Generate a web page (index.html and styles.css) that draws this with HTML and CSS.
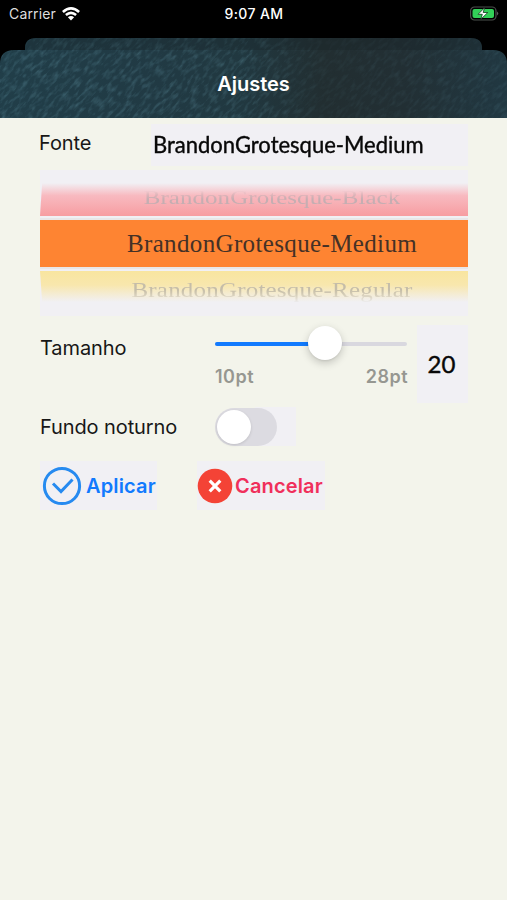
FILE: index.html
```html
<!DOCTYPE html>
<html lang="pt">
<head>
<meta charset="utf-8">
<title>Ajustes</title>
<link rel="stylesheet" href="styles.css">
</head>
<body>
<div class="status">
  <div class="carrier"><span>Carrier</span>
    <svg width="18" height="14" viewBox="0 0 18 14" fill="none" stroke="#fff" stroke-width="2.600"><path d="M.9 5Q9-2.200 17.100 5M3.900 8.100Q9 3.800 14.100 8.100"/><path d="M5.900 10.300Q9 7.700 12.100 10.300L9 13.500Z" fill="#fff" stroke="none"/></svg>
  </div>
  <time>9:07 AM</time>
  <svg class="battery" width="31" height="16" viewBox="0 0 31 16"><rect x="2.600" y="1" width="25.400" height="13" rx="4" fill="none" stroke="#4b504d" stroke-width="1.200"/><rect x="4.500" y="3" width="21.500" height="9" rx="2" fill="#32d158"/><path d="M29 5.500Q31.500 7.500 29 9.500Z" fill="#5b5e5d"/><path d="M16.500 1.800 10.100 8.300h4.200L12.800 13.300l7-6.800h-4.600Z" fill="#fff" stroke="#12381c" stroke-width=".8"/></svg>
</div>
<header class="head">
  <svg class="texture" width="507" height="80" viewBox="0 0 507 80">
    <defs>
      <linearGradient id="tone"><stop offset="0" stop-color="#213e49"/><stop offset=".3" stop-color="#213a44"/><stop offset=".48" stop-color="#213840"/><stop offset=".64" stop-color="#222e31"/><stop offset=".8" stop-color="#222f34"/><stop offset="1" stop-color="#213842"/></linearGradient>
      <linearGradient id="fade"><stop offset="0" stop-color="#fff"/><stop offset=".48" stop-color="#ddd"/><stop offset=".64" stop-color="#444"/><stop offset="1" stop-color="#777"/></linearGradient>
      <filter id="grain" x="0" y="0" width="100%" height="100%"><feTurbulence type="fractalNoise" baseFrequency=".11 .3" numOctaves="3" seed="8"/><feColorMatrix values="0 0 0 0 .18  0 0 0 0 .43  0 0 0 0 .53  1.500 0 0 0 -.65"/></filter>
      <mask id="wear"><rect width="507" height="80" fill="url(#fade)"/></mask>
      <clipPath id="sheets"><path d="M25 12V10Q25 0 36 0H471Q482 0 482 10V12H493Q507 12 507 26V80H0V26Q0 12 14 12Z"/></clipPath>
    </defs>
    <g clip-path="url(#sheets)"><rect width="507" height="80" fill="url(#tone)"/><g mask="url(#wear)"><g transform="rotate(-48 253 40)"><rect x="-50" y="-250" width="620" height="580" filter="url(#grain)" opacity=".45"/></g></g><rect x="25" width="457" height="12" fill="#172226" opacity=".3"/></g>
  </svg>
  <h1>Ajustes</h1>
</header>
<main>
  <section class="font-row"><label>Fonte</label><div class="sample"><span>BrandonGrotesque-Medium</span></div></section>
  <section class="picker">
    <div class="option black"><span>BrandonGrotesque-Black</span></div>
    <div class="option medium"><span>BrandonGrotesque-Medium</span></div>
    <div class="option regular"><span>BrandonGrotesque-Regular</span></div>
  </section>
  <section class="size-row">
    <label>Tamanho</label>
    <div class="range"><div class="track"><div class="filled"></div><div class="knob"></div></div><div class="limits"><span>10pt</span><span>28pt</span></div></div>
    <div class="size"><span>20</span></div>
  </section>
  <section class="night-row"><label>Fundo noturno</label><div class="switch-box"><div class="switch"><div class="thumb"></div></div></div></section>
  <section class="actions">
    <button class="apply"><svg width="40" height="40" viewBox="0 0 40 40" fill="none" stroke="#268af0" stroke-width="3"><circle cx="20" cy="20" r="17.600"/><path d="m11 17.500 8 8 11.500-12"/></svg><span>Aplicar</span></button>
    <button class="cancel"><svg width="36" height="36" viewBox="0 0 36 36"><circle cx="18" cy="18" r="17.300" fill="#f44336"/><path d="m12.700 12.700 10.600 10.600m0-10.600L12.700 23.300" stroke="#fff" stroke-width="3.200"/></svg><span>Cancelar</span></button>
  </section>
</main>
</body>
</html>
```
FILE: styles.css
```css
* { box-sizing: border-box; }
body { margin: 0; height: 900px; overflow: hidden; background: #f3f4eb; font-family: Inter, "Liberation Sans", sans-serif; color: #171717; }
.status { height: 38px; background: #000; color: #fff; display: grid; grid-template-columns: 1fr auto 1fr; padding: 5px 8px 0 9px; align-items: start; }
.carrier { display: flex; align-items: center; gap: 6px; font-size: 14px; line-height: 18px; color: #dedede; letter-spacing: .15px; }
.carrier svg { margin-top: -1px; }
time { font-size: 14px; font-weight: 500; line-height: 18px; letter-spacing: .4px; }
.battery { justify-self: end; margin-top: 1px; }
.head { height: 80px; background: #000; display: grid; }
.head > * { grid-area: 1 / 1; }
.texture { display: block; }
h1 { z-index: 1; margin: 34px 0 0; text-align: center; color: #fff; font-size: 20px; line-height: 24px; font-weight: 600; }
main { padding: 6px 39px 0 40px; }
label { font-size: 20px; line-height: 26px; letter-spacing: -.1px; white-space: nowrap; }
.font-row { display: grid; grid-template-columns: 111px 1fr; height: 42px; }
.font-row label { margin: 6px 0 0 -1px; }
.sample { background: #f1f0f4; padding-left: 2px; font: 400 23px/41px Lato, sans-serif; color: #080808; white-space: nowrap; }
.sample span { display: inline-block; transform: scaleX(.957); transform-origin: left; -webkit-text-stroke: .4px #080808; }
.picker { height: 146px; margin-top: 4px; background: #f1f0f4; padding-top: 13px; text-align: center; font: 25px "Liberation Serif", serif; letter-spacing: .36px; white-space: nowrap; }
.option { display: grid; place-items: center; overflow: hidden; padding-left: 36px; }
.black { height: 33px; margin-bottom: 4px; background: linear-gradient(#f1f0f4, #f8bac0 38%, #f79da1); clip-path: polygon(.5% 0, 100% 0, 100% 100%, 0 100%); }
.black span { color: #c5aeb2; letter-spacing: .05px; transform: translateY(-2px) scaleY(.76); -webkit-mask: linear-gradient(transparent 15%, #000 55%); }
.medium { height: 47px; margin-bottom: 4px; background: #fe8432; color: #453126; box-shadow: 0 0 0 2px #e8e7e8; clip-path: inset(-2px 0); }
.regular { height: 31px; background: linear-gradient(#f8e59f, #f8e7ad 45%, #f1f0f4); clip-path: polygon(0 0, 100% 0, 100% 100%, .5% 100%); }
.regular span { color: #c5bda9; letter-spacing: .2px; transform: translateY(3px) scaleY(.86); -webkit-mask: linear-gradient(#000 50%, transparent 105%); }
.size-row { display: grid; grid-template-columns: 175px 193px 9px 51px; margin-top: 9px; height: 78px; }
.size-row label { padding-top: 10px; }
.range { padding-top: 17px; }
.track { position: relative; height: 4px; margin-right: 1px; border-radius: 2px; background: #d9d8df; }
.filled { width: 57%; height: 100%; border-radius: 2px; background: #117afe; }
.knob { position: absolute; left: 93px; top: -16px; width: 34px; height: 34px; border-radius: 50%; background: #fff; box-shadow: 0 3px 8px #0003, 0 1px 2px #0001; }
.limits { display: flex; justify-content: space-between; margin-top: 18px; font-size: 18px; line-height: 25px; font-weight: 600; letter-spacing: .5px; color: #969791; }
.size { grid-column: 4; background: #f1f0f4; padding-right: 2px; text-align: center; font: 400 24px/78px Lato, sans-serif; -webkit-text-stroke: .4px; color: #080808; }
.night-row { display: grid; grid-template-columns: 175px 81px; height: 39px; margin-top: 4px; }
.night-row label { padding-top: 7px; }
.switch-box { background: linear-gradient(90deg, transparent 40px, #f1f0f4 40px); }
.switch { width: 62px; height: 38px; border-radius: 19px; background: #dcdbe1; padding: 2px; margin-top: 1px; }
.thumb { width: 34px; height: 34px; border-radius: 50%; background: #fff; box-shadow: 0 1px 3px #0002; }
.actions { display: flex; margin-top: 15px; gap: 40px; }
button { display: flex; align-items: center; height: 49px; padding: 0; border: 0; background: #f1f0f4; font: 600 20px/26px Inter, sans-serif; letter-spacing: .15px; white-space: nowrap; }
.apply { width: 117px; color: #117afe; padding-left: 2px; gap: 4px; }
.cancel { width: 128px; color: #f02f5b; gap: 2px; }
button svg { flex: none; }
```
